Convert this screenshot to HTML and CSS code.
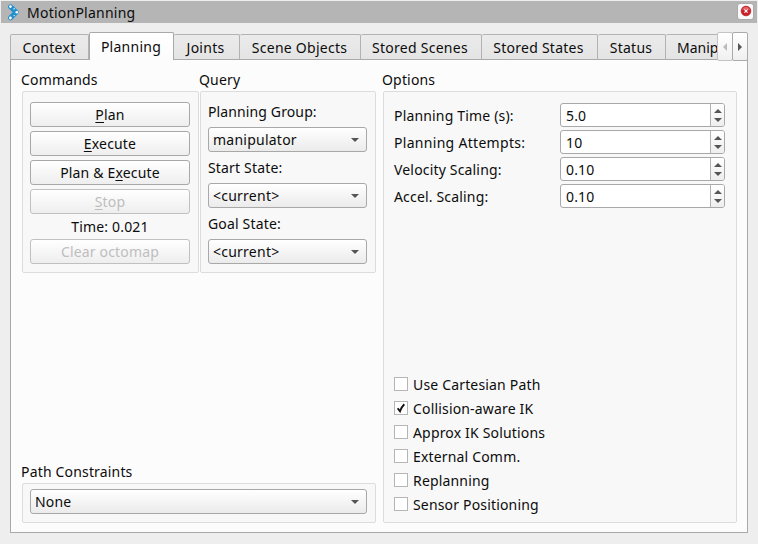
FILE: index.html
```html
<!DOCTYPE html>
<html lang="en">
<head>
<meta charset="utf-8">
<title>MotionPlanning</title>
<link rel="stylesheet" href="styles.css">
</head>
<body>
<header class="titlebar">
  <svg class="logo" width="12" height="17" viewBox="0 0 12 17"><path d="M2.6 2.8 8.2 8.2 2.6 13.8" fill="none" stroke="#2190cf" stroke-width="5" stroke-linejoin="round" stroke-linecap="round"/><g fill="#fff"><circle cx="2.4" cy="2.6" r="1.4"/><circle cx="6.1" cy="4.8" r=".7"/><circle cx="8.8" cy="8.2" r="1.3"/><circle cx="6.2" cy="11.6" r=".7"/><circle cx="2.4" cy="14" r="1.4"/></g></svg>
  <span class="title">MotionPlanning</span>
  <button class="close" aria-label="Close"><svg width="12" height="12" viewBox="0 0 12 12"><circle cx="6" cy="6" r="4.8" fill="#cf1f28" stroke="#b51922" stroke-width=".8"/><path d="M2 5a4.2 4.2 0 0 1 8 0Q6 3.5 2 5" fill="#e2666b"/><path d="m4.4 4.4 3.2 3.2m0-3.2L4.4 7.6" stroke="#fff" stroke-width="1.2"/></svg></button>
</header>
<main class="panel">
  <nav class="tabs">
    <div class="tab t-context">Context</div>
    <div class="tab t-planning active">Planning</div>
    <div class="tab t-joints">Joints</div>
    <div class="tab t-objects">Scene Objects</div>
    <div class="tab t-scenes">Stored Scenes</div>
    <div class="tab t-states">Stored States</div>
    <div class="tab t-status">Status</div>
    <div class="tab t-manip">Manip</div>
    <div class="scroll off"><i class="left"></i></div>
    <div class="scroll"><i class="right"></i></div>
  </nav>
  <div class="page">
    <div class="side">
      <div class="upper">
        <section class="commands">
          <h2>Commands</h2>
          <div class="box">
            <button class="btn"><span><u>P</u>lan</span></button>
            <button class="btn"><span><u>E</u>xecute</span></button>
            <button class="btn"><span>Plan &amp; E<u>x</u>ecute</span></button>
            <button class="btn" disabled><span><u>S</u>top</span></button>
            <div class="time"><span>Time: 0.021</span></div>
            <button class="btn" disabled><span>Clear octomap</span></button>
          </div>
        </section>
        <section class="query">
          <h2>Query</h2>
          <div class="box">
            <label class="tight">Planning Group:</label>
            <div class="combo"><span>manipulator</span><i class="down"></i></div>
            <label>Start State:</label>
            <div class="combo"><span>&lt;current&gt;</span><i class="down"></i></div>
            <label>Goal State:</label>
            <div class="combo"><span>&lt;current&gt;</span><i class="down"></i></div>
          </div>
        </section>
      </div>
      <section class="constraints">
        <h2>Path Constraints</h2>
        <div class="box"><div class="combo"><span>None</span><i class="down"></i></div></div>
      </section>
    </div>
    <section class="options">
      <h2>Options</h2>
      <div class="box">
        <div class="row"><label>Planning Time (s):</label><div class="spin"><span>5.0</span><b><i class="up"></i><i class="down"></i></b></div></div>
        <div class="row"><label class="wide">Planning Attempts:</label><div class="spin"><span>10</span><b><i class="up"></i><i class="down"></i></b></div></div>
        <div class="row"><label>Velocity Scaling:</label><div class="spin"><span>0.10</span><b><i class="up"></i><i class="down"></i></b></div></div>
        <div class="row"><label>Accel. Scaling:</label><div class="spin"><span>0.10</span><b><i class="up"></i><i class="down"></i></b></div></div>
        <div class="checks">
          <div class="check"><i></i><span>Use Cartesian Path</span></div>
          <div class="check"><i><svg width="12" height="12" viewBox="0 0 12 12"><path d="M2.7 6.2 5 9.3Q6.5 5 9.3 2.3" fill="none" stroke="#111" stroke-width="1.9"/></svg></i><span>Collision-aware IK</span></div>
          <div class="check"><i></i><span>Approx IK Solutions</span></div>
          <div class="check"><i></i><span>External Comm.</span></div>
          <div class="check"><i></i><span>Replanning</span></div>
          <div class="check"><i></i><span>Sensor Positioning</span></div>
        </div>
      </div>
    </section>
  </div>
</main>
</body>
</html>
```
FILE: styles.css
```css
* { box-sizing: border-box; }
body { margin: 0; width: 758px; height: 544px; overflow: hidden; padding: 1px; background: #eee; color: #0c0c0c; font: 14px/20px "Noto Sans", sans-serif; letter-spacing: .17px; }
button { font: inherit; color: inherit; letter-spacing: inherit; padding: 0; }
h2 { margin: 0 0 0 -1px; font-size: 14px; font-weight: 400; line-height: 20px; }
.titlebar { height: 22px; background: #b5b5b5; display: flex; align-items: center; padding: 0 3px 0 7px; }
.logo { margin-right: 7px; }
.title { flex: 1; letter-spacing: .24px; position: relative; top: 1px; }
.close { width: 17px; height: 17px; border: 1px solid #aaa; border-radius: 3px; background: #fafafa; display: flex; align-items: center; justify-content: center; margin-top: -2px; }
.panel { margin: 9px 9px 0; }
.tabs { display: flex; align-items: flex-end; height: 28px; position: relative; z-index: 1; }
.tab { height: 26px; border: 1px solid #b2b2b2; border-left-width: 0; border-bottom-color: #a9a9a9; border-radius: 2px 2px 0 0; background: linear-gradient(#ebebeb, #e4e4e4); line-height: 26px; text-align: center; white-space: nowrap; letter-spacing: .26px; padding-right: 1px; }
.tab.active { height: 28px; background: linear-gradient(#fff, #fcfcfc); border-left-width: 1px; border-color: #a9a9a9; border-bottom: 0; line-height: 27px; padding-right: 1px; }
.t-context { width: 79px; border-left-width: 1px; }
.t-planning { width: 85px; }
.t-joints { width: 66px; padding-right: 2px; }
.t-objects { width: 121px; }
.t-scenes { width: 121px; padding-right: 2px; }
.t-states { width: 116px; padding-right: 2px; }
.t-status { width: 68px; }
.t-manip { width: 51px; border-right: 0; border-radius: 2px 0 0 0; text-align: left; padding: 0 0 0 11px; letter-spacing: 0; overflow: hidden; }
.scroll { width: 16px; height: 29px; margin-bottom: -1px; border: 1px solid #c4c4c4; border-radius: 2px; background: linear-gradient(#fff, #f0f0f0); display: flex; align-items: center; justify-content: center; flex-shrink: 0; }
.scroll + .scroll { border-color: #aaa; }
.scroll:last-child { width: 16px; margin-left: -1px; }
.left { border: 4px solid transparent; border-left: 0; border-right: 4px solid #bbb; }
.right { border: 4px solid transparent; border-right: 0; border-left: 4px solid #555; }
.page { height: 474px; margin-top: -1px; border: 1px solid #a9a9a9; background: #fcfcfc; padding: 10px 10px 9px 11px; display: flex; gap: 7px; }
.side { width: 354px; display: flex; flex-direction: column; justify-content: space-between; }
.upper { display: flex; gap: 1px; }
.box { border: 1px solid #dcdcdc; border-radius: 2px; background: #f8f8f8; margin-top: 1px; padding: 10px 7px 7px; }
.commands { width: 177px; }
.query { width: 176px; }
.commands .box, .query .box { height: 182px; }
.commands .box { padding-right: 8px; }
.btn { display: block; width: 160px; height: 25px; border: 1px solid #a8a8a8; border-radius: 3px; background: linear-gradient(#fff, #eee); line-height: 23px; margin-bottom: 4px; }
.btn:disabled { border-color: #c0c0c0; color: #bebebe; }
u { text-underline-offset: 2px; text-decoration-thickness: 1px; }
.time { height: 21px; line-height: 18px; text-align: center; width: 160px; }
.query label { display: block; height: 25px; line-height: 20px; }
.query .combo { letter-spacing: .24px; }
.combo { height: 25px; margin-bottom: 6px; width: 159px; border: 1px solid #a8a8a8; border-radius: 3px; background: linear-gradient(#fff, #ebebeb); display: flex; align-items: center; justify-content: space-between; padding: 0 7px 0 4px; }
.tight { letter-spacing: .12px; }
.down, .up { border: 4px solid transparent; width: 0; height: 0; }
.down { border-top-color: #555; border-bottom: 0; }
.up { border-bottom-color: #555; border-top: 0; }
.constraints .box { height: 40px; padding-top: 5px; }
.constraints .combo { width: 337px; }
.options { width: 354px; display: flex; flex-direction: column; }
.options .box { flex: 1; padding: 11px 11px 5px 10px; display: flex; flex-direction: column; }
.row { display: flex; justify-content: space-between; align-items: center; height: 24px; margin-bottom: 3px; }
.row label { padding-top: 2px; }
.row .wide { letter-spacing: .3px; }
.spin { width: 165px; height: 24px; border: 1px solid #a8a8a8; border-radius: 3px; background: #fff; display: flex; justify-content: space-between; overflow: hidden; line-height: 23px; padding-left: 5px; }
.spin b { width: 14px; border-left: 1px solid #b2b2b2; background: linear-gradient(#fff, #eee); display: flex; flex-direction: column; justify-content: center; align-items: center; gap: 5px; }
.spin .up { border-width: 0 4px 4px; }
.spin .down { border-width: 4px 4px 0; }
.checks { margin-top: auto; }
.check { height: 24px; display: flex; align-items: center; }
.check > i { width: 14px; height: 14px; border: 1px solid #b6b6b6; background: #fff; margin: -3px 5px 0 0; display: flex; }
```
